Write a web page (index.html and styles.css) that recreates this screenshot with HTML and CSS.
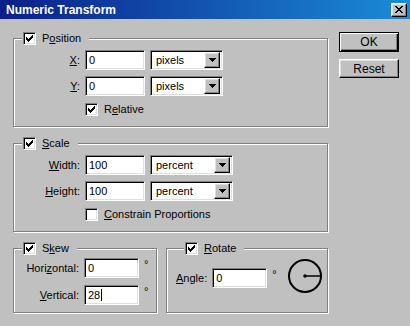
FILE: index.html
```html
<!DOCTYPE html>
<html lang="en">
<head>
  <meta charset="UTF-8" />
  <title>Numeric Transform</title>
  <link rel="stylesheet" href="styles.css">
</head>
<body>
  <div class="window">
    <div class="titlebar">
      <span class="title">Numeric Transform</span>
      <span class="close raised">
        <svg width="8" height="7" viewBox="0 0 8 7" shape-rendering="crispEdges">
          <path d="M0 0h2v1H0zM6 0h2v1H6zM1 1h2v1H1zM5 1h2v1H5zM2 2h4v1H2zM3 3h2v1H3zM2 4h4v1H2zM1 5h2v1H1zM5 5h2v1H5zM0 6h2v1H0zM6 6h2v1H6z" fill="#000"/>
        </svg>
      </span>
    </div>

    <div class="dialog">
      <div class="groups">
        <!-- Position -->
        <fieldset class="group">
          <legend>
            <span class="check"><svg width="7" height="7" viewBox="0 0 7 7" shape-rendering="crispEdges"><path d="M6 0h1v1H6zM5 1h2v1H5zM0 2h1v1H0zM4 2h3v1H4zM0 3h2v1H0zM3 3h3v1H3zM0 4h5v1H0zM1 5h3v1H1zM2 6h1v1H2z"/></svg></span>
            <span>P<u>o</u>sition</span>
          </legend>
          <div class="rows">
            <span class="lbl"><u>X</u>:</span>
            <span class="field">0</span>
            <span class="select"><span class="select-text">pixels</span><span class="drop raised"><svg width="7" height="4" viewBox="0 0 7 4" shape-rendering="crispEdges"><path d="M0 0h7v1H0zM1 1h5v1H1zM2 2h3v1H2zM3 3h1v1H3z"/></svg></span></span>

            <span class="lbl"><u>Y</u>:</span>
            <span class="field">0</span>
            <span class="select"><span class="select-text">pixels</span><span class="drop raised"><svg width="7" height="4" viewBox="0 0 7 4" shape-rendering="crispEdges"><path d="M0 0h7v1H0zM1 1h5v1H1zM2 2h3v1H2zM3 3h1v1H3z"/></svg></span></span>

            <span class="option">
              <span class="check"><svg width="7" height="7" viewBox="0 0 7 7" shape-rendering="crispEdges"><path d="M6 0h1v1H6zM5 1h2v1H5zM0 2h1v1H0zM4 2h3v1H4zM0 3h2v1H0zM3 3h3v1H3zM0 4h5v1H0zM1 5h3v1H1zM2 6h1v1H2z"/></svg></span>
              <span>R<u>e</u>lative</span>
            </span>
          </div>
        </fieldset>

        <!-- Scale -->
        <fieldset class="group group-scale">
          <legend>
            <span class="check"><svg width="7" height="7" viewBox="0 0 7 7" shape-rendering="crispEdges"><path d="M6 0h1v1H6zM5 1h2v1H5zM0 2h1v1H0zM4 2h3v1H4zM0 3h2v1H0zM3 3h3v1H3zM0 4h5v1H0zM1 5h3v1H1zM2 6h1v1H2z"/></svg></span>
            <span><u>S</u>cale</span>
          </legend>
          <div class="rows">
            <span class="lbl"><u>W</u>idth:</span>
            <span class="field">100</span>
            <span class="select"><span class="select-text">percent</span><span class="drop raised"><svg width="7" height="4" viewBox="0 0 7 4" shape-rendering="crispEdges"><path d="M0 0h7v1H0zM1 1h5v1H1zM2 2h3v1H2zM3 3h1v1H3z"/></svg></span></span>

            <span class="lbl"><u>H</u>eight:</span>
            <span class="field">100</span>
            <span class="select"><span class="select-text">percent</span><span class="drop raised"><svg width="7" height="4" viewBox="0 0 7 4" shape-rendering="crispEdges"><path d="M0 0h7v1H0zM1 1h5v1H1zM2 2h3v1H2zM3 3h1v1H3z"/></svg></span></span>

            <span class="option">
              <span class="check"></span>
              <span><u>C</u>onstrain Proportions</span>
            </span>
          </div>
        </fieldset>

        <div class="bottom-row">
          <!-- Skew -->
          <fieldset class="group group-skew">
            <legend>
              <span class="check"><svg width="7" height="7" viewBox="0 0 7 7" shape-rendering="crispEdges"><path d="M6 0h1v1H6zM5 1h2v1H5zM0 2h1v1H0zM4 2h3v1H4zM0 3h2v1H0zM3 3h3v1H3zM0 4h5v1H0zM1 5h3v1H1zM2 6h1v1H2z"/></svg></span>
              <span>S<u>k</u>ew</span>
            </legend>
            <div class="skew-rows">
              <span class="lbl">Hori<u>z</u>ontal:</span>
              <span class="field">0</span>
              <span class="deg">°</span>

              <span class="lbl"><u>V</u>ertical:</span>
              <span class="field">28<span class="caret"></span></span>
              <span class="deg">°</span>
            </div>
          </fieldset>

          <!-- Rotate -->
          <fieldset class="group group-rotate">
            <legend>
              <span class="check"><svg width="7" height="7" viewBox="0 0 7 7" shape-rendering="crispEdges"><path d="M6 0h1v1H6zM5 1h2v1H5zM0 2h1v1H0zM4 2h3v1H4zM0 3h2v1H0zM3 3h3v1H3zM0 4h5v1H0zM1 5h3v1H1zM2 6h1v1H2z"/></svg></span>
              <span><u>R</u>otate</span>
            </legend>
            <div class="rotate-row">
              <span class="lbl"><u>A</u>ngle:</span>
              <span class="field field-angle">0</span>
              <span class="deg">°</span>
              <svg class="dial" width="36" height="36" viewBox="0 0 36 36">
                <circle cx="18" cy="18" r="16" fill="none" stroke="#000" stroke-width="2"/>
                <line x1="18" y1="18" x2="34" y2="18" stroke="#000" stroke-width="1.5"/>
                <circle cx="18" cy="18" r="1.8" fill="#000"/>
              </svg>
            </div>
          </fieldset>
        </div>
      </div>

      <div class="buttons">
        <button class="btn btn-default">OK</button>
        <button class="btn">Reset</button>
      </div>
    </div>
  </div>
</body>
</html>
```

FILE: styles.css
```css
* {
  box-sizing: border-box;
  margin: 0;
  padding: 0;
}

body {
  width: 410px;
  height: 326px;
  overflow: hidden;
  background-color: #c0c0c0;
  font-family: "Liberation Sans", Arial, sans-serif;
  font-size: 11px;
  color: #000;
}

u {
  text-decoration-thickness: 1px;
  text-underline-offset: 1px;
}

/* Bevels */
.raised {
  border: 1px solid;
  border-color: #fff #000 #000 #fff;
  box-shadow: inset -1px -1px #808080, inset 1px 1px #dfdfdf;
  background: #c0c0c0;
}

/* Title bar */
.titlebar {
  height: 19px;
  display: flex;
  align-items: center;
  justify-content: space-between;
  padding: 0 3px 0 6px;
  background: linear-gradient(to right, #0b1e8a, #1a8cd8);
}

.title {
  color: #fff;
  font-weight: bold;
  font-size: 12px;
}

.close {
  width: 16px;
  height: 14px;
  display: flex;
  align-items: center;
  justify-content: center;
}

/* Dialog body */
.dialog {
  display: flex;
  gap: 11px;
  padding: 13px 0 0 13px;
}

.groups {
  width: 315px;
  display: flex;
  flex-direction: column;
  gap: 10px;
}

.group {
  border: 1px solid #808080;
  box-shadow: inset 1px 1px #fff, 1px 1px #fff;
  padding: 5px 0 11px 0;
}

.group legend {
  display: flex;
  align-items: center;
  gap: 6px;
  margin-left: 8px;
  padding: 0 8px 0 1px;
  background: #c0c0c0;
  line-height: 13px;
}

.check {
  width: 13px;
  height: 13px;
  flex: none;
  display: flex;
  align-items: center;
  justify-content: center;
  background: #fff;
  border: 1px solid;
  border-color: #808080 #fff #fff #808080;
  box-shadow: inset 1px 1px #000, inset -1px -1px #dfdfdf;
}

/* Rows with label / field / select */
.rows {
  display: grid;
  grid-template-columns: 66px 60px 73px;
  grid-template-rows: 20px 20px 13px;
  column-gap: 5px;
  row-gap: 6px;
  align-items: center;
}

.group-scale .rows {
  grid-template-columns: 66px 60px 83px;
}

.lbl {
  text-align: right;
  white-space: nowrap;
}

.field {
  height: 20px;
  display: flex;
  align-items: center;
  padding-left: 3px;
  background: #fff;
  border: 1px solid;
  border-color: #808080 #fff #fff #808080;
  box-shadow: inset 1px 1px #000, inset -1px -1px #dfdfdf;
}

.caret {
  width: 1px;
  height: 12px;
  margin-left: 1px;
  background: #000;
}

.select {
  height: 20px;
  display: flex;
  align-items: center;
  padding: 2px;
  background: #fff;
  border: 1px solid;
  border-color: #808080 #fff #fff #808080;
  box-shadow: inset 1px 1px #000, inset -1px -1px #dfdfdf;
}

.select-text {
  flex: 1;
  padding-left: 3px;
}

.drop {
  width: 16px;
  height: 16px;
  display: flex;
  align-items: center;
  justify-content: center;
}

.option {
  grid-column: 2 / 4;
  display: flex;
  align-items: center;
  gap: 6px;
  height: 13px;
  margin-top: 1px;
}

/* Skew + Rotate */
.bottom-row {
  display: flex;
  gap: 9px;
}

.group-skew {
  width: 144px;
  padding: 3px 0 7px 0;
}

.skew-rows {
  display: grid;
  grid-template-columns: 65px 55px auto;
  grid-auto-rows: 20px;
  column-gap: 5px;
  row-gap: 7px;
  align-items: center;
}

.deg {
  align-self: start;
  line-height: 12px;
}

.group-rotate {
  flex: 1;
  padding: 3px 0 7px 9px;
}

.rotate-row {
  display: flex;
  align-items: center;
  height: 40px;
}

.rotate-row .lbl {
  margin-right: 5px;
}

.field-angle {
  width: 55px;
}

.rotate-row .deg {
  align-self: center;
  margin: -8px 0 0 5px;
}

.dial {
  margin: -4px 0 0 10px;
}

/* Buttons */
.buttons {
  width: 60px;
  display: flex;
  flex-direction: column;
  gap: 7px;
}

.btn {
  height: 19px;
  font-family: "Liberation Sans", Arial, sans-serif;
  font-size: 12px;
  color: #000;
  background: #c0c0c0;
  border: 1px solid;
  border-color: #fff #000 #000 #fff;
  box-shadow: inset -1px -1px #808080, inset 1px 1px #dfdfdf;
}

.btn-default {
  height: 20px;
  border: 1px solid #000;
  box-shadow: inset 1px 1px #fff, inset -1px -1px #000, inset -2px -2px #808080;
}
```
